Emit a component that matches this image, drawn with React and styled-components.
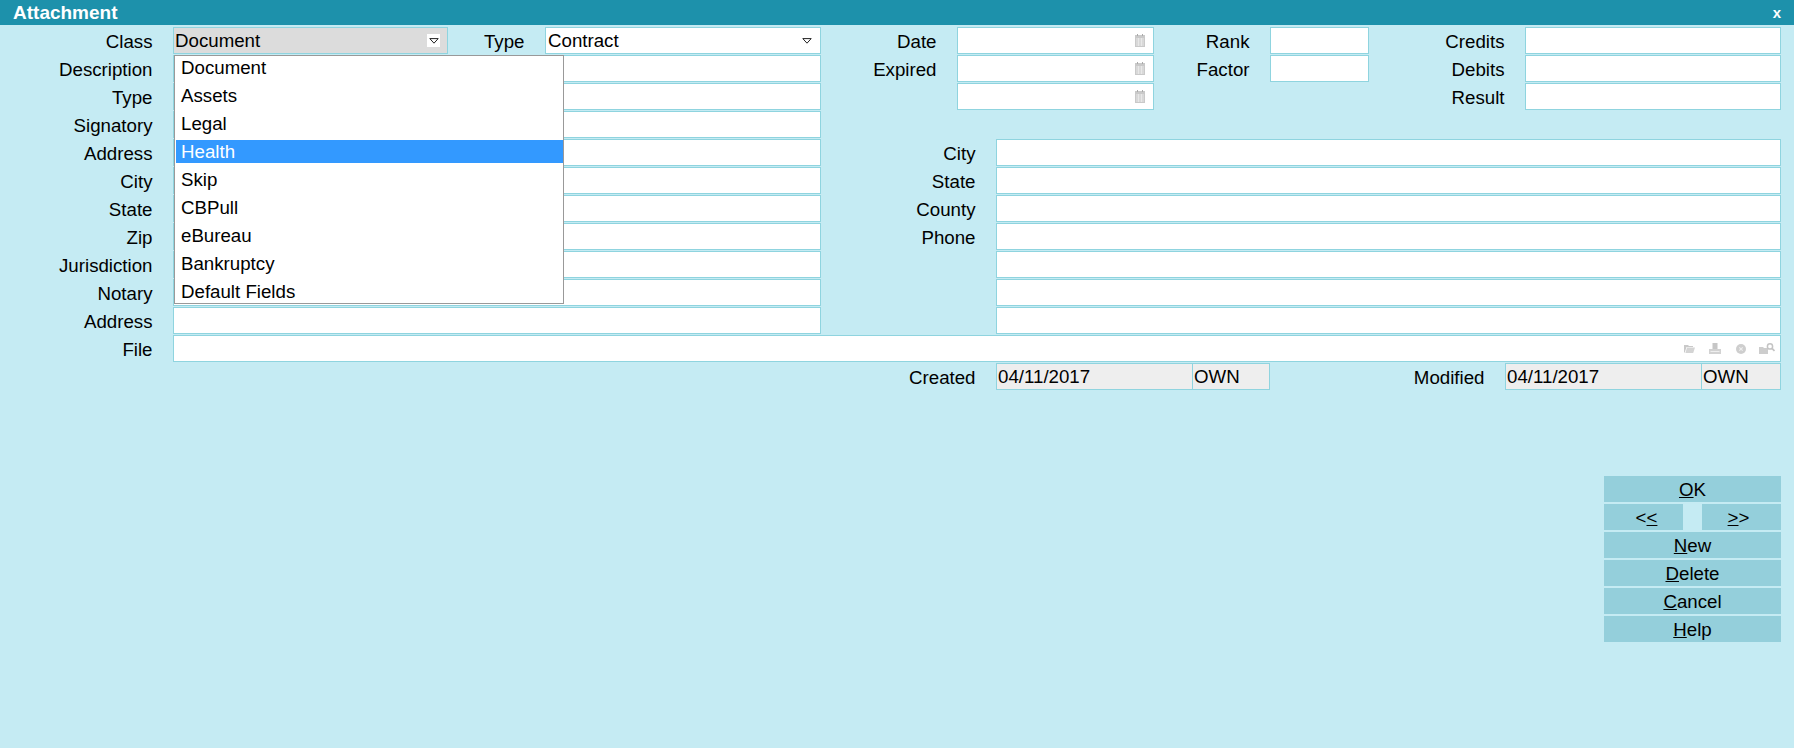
import React from 'react';
import styled, { createGlobalStyle } from 'styled-components';

const classOptions = ['Document', 'Assets', 'Legal', 'Health', 'Skip', 'CBPull', 'eBureau', 'Bankruptcy', 'Default Fields'];

const leftRows = [
  [2, 'Description'],
  [3, 'Type'],
  [4, 'Signatory'],
  [5, 'Address'],
  [6, 'City'],
  [7, 'State'],
  [8, 'Zip'],
  [9, 'Jurisdiction'],
  [10, 'Notary'],
  [11, 'Address'],
];

const rightRows = [
  [5, 'City'],
  [6, 'State'],
  [7, 'County'],
  [8, 'Phone'],
  [9, ''],
  [10, ''],
  [11, ''],
];

const CaretIcon = () => (
  <svg width="10" height="6" viewBox="0 0 10 6">
    <path d="M0.8 0.6 H9.2 L5 5.2 Z" fill="#fff" stroke="#222" strokeWidth="1" />
  </svg>
);

const CalendarIcon = () => (
  <svg width="10" height="13" viewBox="0 0 10 13">
    <rect x="0" y="1" width="10" height="12" fill="#c9c9c9" />
    <rect x="2" y="0" width="1" height="2" fill="#aaa" />
    <rect x="7" y="0" width="1" height="2" fill="#aaa" />
    <path d="M1 5 H9 M1 7 H9 M1 9 H9 M1 11 H9 M3.5 4 V12 M6.5 4 V12" stroke="#e8e8e8" strokeWidth="1" />
  </svg>
);

const FolderIcon = () => (
  <svg width="11" height="9" viewBox="0 0 11 9">
    <path d="M0 1 H4 L5 2 H9 V3 H2.5 L0.8 8.5 H0 Z" fill="#c9c9c9" />
    <path d="M3 3.6 H11 L9.2 9 H1.4 Z" fill="#d4d4d4" />
  </svg>
);

const PrintIcon = () => (
  <svg width="12" height="11" viewBox="0 0 12 11">
    <rect x="3.5" y="0" width="5" height="6" fill="#c6c6c6" />
    <rect x="0" y="6" width="12" height="5" fill="#d2d2d2" />
    <rect x="1.5" y="8" width="9" height="1" fill="#eee" />
  </svg>
);

const ClearIcon = () => (
  <svg width="10" height="10" viewBox="0 0 10 10">
    <circle cx="5" cy="5" r="5" fill="#cecece" />
    <path d="M3.3 3.3 L6.7 6.7 M6.7 3.3 L3.3 6.7" stroke="#eee" strokeWidth="1.2" />
  </svg>
);

const FolderSearchIcon = () => (
  <svg width="16" height="11" viewBox="0 0 16 11">
    <path d="M0 4 H4 L5 5 H9 V11 H0 Z" fill="#cdcdcd" />
    <circle cx="11" cy="3.4" r="2.6" fill="#fff" stroke="#c4c4c4" strokeWidth="1.5" />
    <path d="M13 5.4 L15.5 8" stroke="#c4c4c4" strokeWidth="1.8" />
  </svg>
);

const App = () => (
  <Page>
    <GlobalStyle />
    <TitleBar>
      <Title>Attachment</Title>
      <CloseMark>x</CloseMark>
    </TitleBar>

    <FormGrid>
      <Label $row={1} $from={1} $to={2}>Class</Label>
      <ClassSelect $row={1} $from={2} $to={3}>
        <ClassText>Document</ClassText>
        <CaretBox><CaretIcon /></CaretBox>
        <OptionList>
          {classOptions.map((option) => (
            <Option key={option} $active={option === 'Health'}>{option}</Option>
          ))}
        </OptionList>
      </ClassSelect>
      <Label $row={1} $from={3} $to={4}>Type</Label>
      <TypeSelect $row={1} $from={4} $to={5}>
        <FieldText>Contract</FieldText>
        <CaretIcon />
      </TypeSelect>

      {leftRows.map(([row, text]) => (
        <React.Fragment key={row}>
          <Label $row={row} $from={1} $to={2}>{text}</Label>
          <Field $row={row} $from={2} $to={5} />
        </React.Fragment>
      ))}

      <Label $row={1} $from={5} $to={6}>Date</Label>
      <DateField $row={1} $from={6} $to={8}><CalendarIcon /></DateField>
      <Label $row={2} $from={5} $to={6}>Expired</Label>
      <DateField $row={2} $from={6} $to={8}><CalendarIcon /></DateField>
      <DateField $row={3} $from={6} $to={8}><CalendarIcon /></DateField>

      <Label $row={1} $from={8} $to={10}>Rank</Label>
      <Field $row={1} $from={10} $to={11} />
      <Label $row={2} $from={8} $to={10}>Factor</Label>
      <Field $row={2} $from={10} $to={11} />

      <Label $row={1} $from={11} $to={13}>Credits</Label>
      <Field $row={1} $from={13} $to={15} />
      <Label $row={2} $from={11} $to={13}>Debits</Label>
      <Field $row={2} $from={13} $to={15} />
      <Label $row={3} $from={11} $to={13}>Result</Label>
      <Field $row={3} $from={13} $to={15} />

      {rightRows.map(([row, text]) => (
        <React.Fragment key={row}>
          {text && <Label $row={row} $from={5} $to={7}>{text}</Label>}
          <Field $row={row} $from={7} $to={15} />
        </React.Fragment>
      ))}

      <Label $row={12} $from={1} $to={2}>File</Label>
      <FileField $row={12} $from={2} $to={15}>
        <IconSlot><FolderIcon /></IconSlot>
        <IconSlot><PrintIcon /></IconSlot>
        <IconSlot><ClearIcon /></IconSlot>
        <IconSlot><FolderSearchIcon /></IconSlot>
      </FileField>

      <Label $row={13} $from={5} $to={7}>Created</Label>
      <ReadOnly $row={13} $from={7} $to={9}><ClassText>04/11/2017</ClassText></ReadOnly>
      <ReadOnlyTail $row={13} $from={9} $to={10}><ClassText>OWN</ClassText></ReadOnlyTail>
      <Label $row={13} $from={9} $to={12}>Modified</Label>
      <ReadOnly $row={13} $from={12} $to={14}><ClassText>04/11/2017</ClassText></ReadOnly>
      <ReadOnlyTail $row={13} $from={14} $to={15}><ClassText>OWN</ClassText></ReadOnlyTail>
    </FormGrid>

    <ButtonPanel>
      <ActionButton><u>O</u>K</ActionButton>
      <NavRow>
        <NavButton $side="left">&lt;<u>&lt;</u></NavButton>
        <NavButton $side="right"><u>&gt;</u>&gt;</NavButton>
      </NavRow>
      <ActionButton><u>N</u>ew</ActionButton>
      <ActionButton><u>D</u>elete</ActionButton>
      <ActionButton><u>C</u>ancel</ActionButton>
      <ActionButton><u>H</u>elp</ActionButton>
    </ButtonPanel>
  </Page>
);

export default App;

const GlobalStyle = createGlobalStyle`
  html, body {
    margin: 0;
    padding: 0;
    background: #c5ebf3;
  }

  body {
    font-family: "Liberation Sans", Arial, sans-serif;
    font-size: 18.7px;
    color: #000;
  }
`;

const Page = styled.div`
  width: 1794px;
  height: 748px;
  overflow: hidden;
  background: #c5ebf3;
`;

const TitleBar = styled.div`
  height: 25px;
  padding: 0 13px 0 13px;
  display: flex;
  align-items: center;
  justify-content: space-between;
  background: #1d91ab;
  color: #fff;
  font-weight: 700;
`;

const Title = styled.span`
  font-size: 19px;
`;

const CloseMark = styled.span`
  font-size: 15px;
`;

const FormGrid = styled.div`
  margin-top: 2px;
  display: grid;
  grid-template-columns: 173px 275px 97px 276px 136px 39px 158px 39px 77px 99px 136px 20px 177px 79px;
  grid-auto-rows: 27px;
  row-gap: 1px;
`;

const Cell = styled.div`
  grid-row: ${(p) => p.$row};
  grid-column: ${(p) => p.$from} / ${(p) => p.$to};
  min-width: 0;
`;

const Label = styled(Cell)`
  padding: 1px 20.5px 0 0;
  line-height: 27px;
  text-align: right;
  white-space: nowrap;
`;

const Field = styled(Cell)`
  box-sizing: border-box;
  display: flex;
  align-items: center;
  background: #fff;
  border: 1px solid #8fd4df;
`;

const FieldText = styled.span`
  padding: 1px 0 0 2px;
  white-space: nowrap;
`;

const ClassText = styled(FieldText)`
  padding-left: 1px;
`;

const TypeSelect = styled(Field)`
  justify-content: space-between;
  padding-right: 8px;
`;

const ClassSelect = styled(Field)`
  position: relative;
  justify-content: space-between;
  padding-right: 7px;
  background: #dcdcdc;
`;

const CaretBox = styled.span`
  width: 13px;
  height: 13px;
  display: flex;
  align-items: center;
  justify-content: center;
  background: #fff;
`;

const OptionList = styled.div`
  position: absolute;
  top: 27px;
  left: 0;
  z-index: 2;
  box-sizing: border-box;
  width: 390px;
  height: 249px;
  padding-left: 1px;
  display: flex;
  flex-direction: column;
  gap: 5px;
  background: #fff;
  border: 1px solid #999;
`;

const Option = styled.div`
  height: 23px;
  padding-left: 5px;
  line-height: 23px;
  background: ${(p) => (p.$active ? '#3399ff' : 'transparent')};
  color: ${(p) => (p.$active ? '#fff' : '#000')};
`;

const DateField = styled(Field)`
  justify-content: flex-end;
  padding-right: 8px;
`;

const FileField = styled(Field)`
  justify-content: flex-end;
`;

const IconSlot = styled.span`
  width: 26px;
  display: flex;
  justify-content: center;
`;

const ReadOnly = styled(Field)`
  background: #eeeeee;
`;

const ReadOnlyTail = styled(ReadOnly)`
  border-left: none;
`;

const ButtonPanel = styled.div`
  width: 177px;
  margin: 86px 13px 0 auto;
  display: flex;
  flex-direction: column;
  gap: 2px;
`;

const ActionButton = styled.div`
  height: 26px;
  line-height: 27px;
  text-align: center;
  background: #94cfdb;
`;

const NavRow = styled.div`
  display: flex;
  justify-content: space-between;
`;

const NavButton = styled(ActionButton)`
  box-sizing: border-box;
  width: 79px;
  padding-${(p) => p.$side}: 6px;
`;
